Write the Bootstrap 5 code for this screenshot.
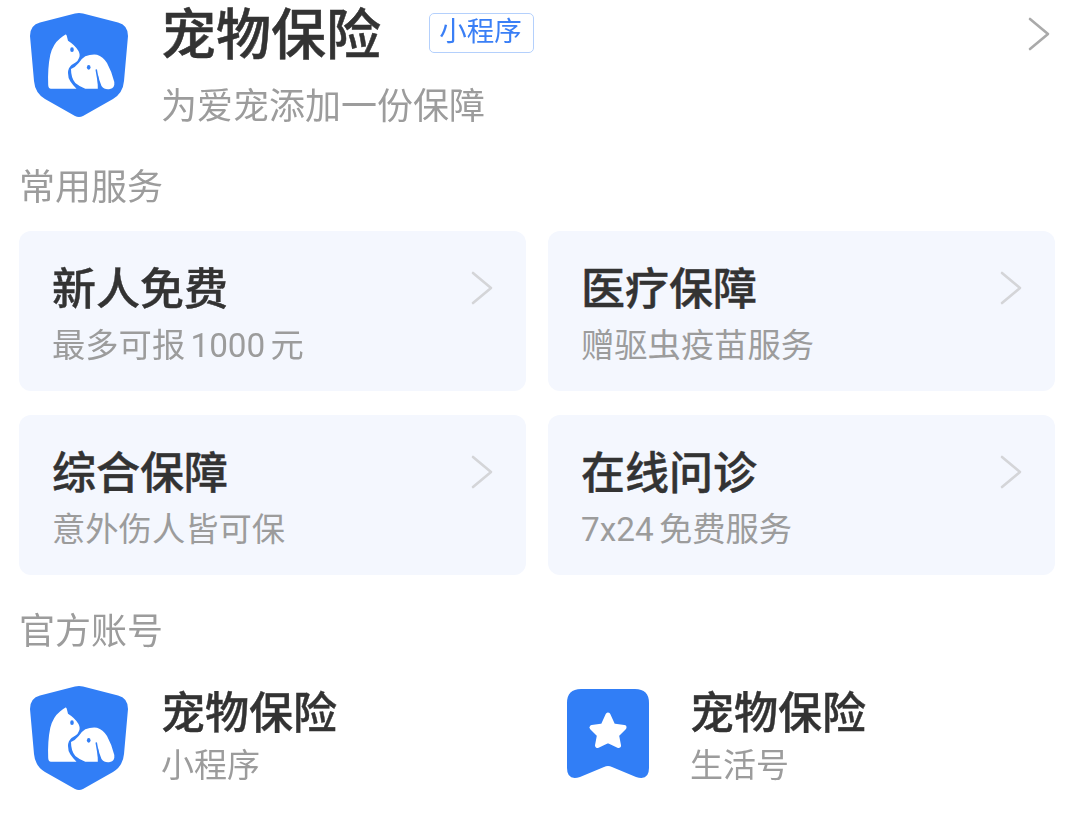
<!DOCTYPE html>
<html lang="zh">
<head>
<meta charset="utf-8">
<title>宠物保险</title>
<link rel="stylesheet" href="https://cdn.jsdelivr.net/npm/bootstrap@5.3.0/dist/css/bootstrap.min.css">
<style>
html,body{height:820px;overflow:hidden}
body{font-family:"Roboto","Noto Sans CJK SC",sans-serif;background:#fff;color:#333}
.pg{padding:0 25px 0 19px;filter:blur(.45px)}
.hd{height:138px;padding:13px 5px 0 11px}
.shield{width:98px;height:105px;flex:none}
.hd-main{margin-left:33px;margin-top:-13px}
.hd-title{font-size:55px;line-height:70px;font-weight:500;color:#333;margin:0;-webkit-text-stroke:.5px #333}
.tag{margin-left:48px;margin-top:-5px;height:40px;width:105px;border:1.5px solid #b4d0fc;border-radius:5px;color:#3a7ff6;font-size:27.500px;line-height:36px;text-align:center;white-space:nowrap;padding-right:2px}
.hd-sub{font-size:36px;line-height:50px;color:#9c9c9c;margin-top:12px}
.sec{font-size:36px;line-height:50px;color:#9c9c9c}
.sec-a{margin-top:25px}
.svc{display:grid;grid-template-columns:507px 507px;column-gap:22px;row-gap:24px;margin-top:18px}
.tile{height:160px;background:#f4f7fe;border-radius:12px;padding:0 33px}
.tile-t{font-size:44px;line-height:56px;font-weight:500;color:#333;margin-top:31px;-webkit-text-stroke:.4px #333}
.tile-s{font-size:33.300px;line-height:44px;color:#9c9c9c;margin-top:6px;white-space:nowrap;word-spacing:-3px}
.tile .chev{margin-top:40px}
.chev{flex:none}
.sec-b{margin-top:32px}
.acc{margin-top:29px;display:grid;grid-template-columns:529px 1fr}
.acc-i{height:110px}
.acc-l{width:142px;flex:none;padding-left:11px}
.acc-r{width:142px;flex:none;padding-left:19px}
.acc-t{font-size:44px;line-height:52px;font-weight:500;color:#333;margin-top:2px;-webkit-text-stroke:.4px #333}
.acc-s{font-size:33px;line-height:44px;color:#9c9c9c;margin-top:4px}
.t-col{min-width:0}
</style>
</head>
<body>
<svg width="0" height="0" class="d-block" aria-hidden="true">
<defs>
<symbol id="pet" viewBox="0 0 98 105">
<path fill="#317ef6" d="M49 0 Q51 0 53 .6 L88 9.500 Q98 12 98 23 L94 68 Q93 80 83 86 L53 103 Q49 105 45 103 L15 86 Q5 80 4 68 L0 23 Q0 12 10 9.500 L45 .6 Q47 0 49 0Z"/>
<path fill="#fff" d="M35.500 21.500 Q36.500 21 36.800 23 L38 27.700 Q45 32 48.500 38 Q50.500 42 49 45 Q48 48 45.500 49.500 L41.500 52 Q38 55 38 60 Q38 65 40.300 68.300 Q43 72.500 46.500 75.700 L21 75.700 Q18.300 75.700 18.200 72 Q17.500 55 20.300 41.700 Q23 31 30 25.500 Q33 23 35.500 21.500Z"/>
<path fill="#fff" d="M41 56 Q45 54.500 48.700 50 Q51 46 55.300 43.300 Q61 41 67 41.700 Q73 43.500 77 50 Q82 59 84.300 69 Q85 75 80 76 Q74.500 77 71.500 73 Q69 67 67.500 60 L67.800 75.700 L55.300 75.700 Q50 74 45.300 70 Q41 65 41 56Z"/>
<path fill="none" stroke="#317ef6" stroke-width="1.500" stroke-linecap="round" d="M66.300 57 L69.300 74.500"/>
<ellipse cx="42" cy="36.700" rx="1.800" ry="2.400" fill="#317ef6"/>
<ellipse cx="58.700" cy="54.300" rx="1.800" ry="2.400" fill="#317ef6"/>
</symbol>
<symbol id="chv" viewBox="0 0 22 34">
<path d="M2 2 L20 17 L2 32" fill="none" stroke="currentColor" stroke-width="2.600" stroke-linecap="round" stroke-linejoin="round"/>
</symbol>
</defs>
</svg>
<div class="pg">
<header class="hd d-flex align-items-start">
<svg class="shield"><use href="#pet"/></svg>
<div class="hd-main flex-grow-1">
<div class="d-flex align-items-center">
<h1 class="hd-title">宠物保险</h1>
<span class="tag">小程序</span>
</div>
<div class="hd-sub">为爱宠添加一份保障</div>
</div>
<svg class="chev" width="22" height="34" style="color:#aaa;margin-top:4px"><use href="#chv"/></svg>
</header>

<div class="sec sec-a">常用服务</div>
<div class="svc">
<div class="tile d-flex justify-content-between">
<div><div class="tile-t">新人免费</div><div class="tile-s">最多可报 1000 元</div></div>
<svg class="chev" width="22" height="34" style="color:#d4d5d8"><use href="#chv"/></svg>
</div>
<div class="tile d-flex justify-content-between">
<div><div class="tile-t">医疗保障</div><div class="tile-s">赠驱虫疫苗服务</div></div>
<svg class="chev" width="22" height="34" style="color:#d4d5d8"><use href="#chv"/></svg>
</div>
<div class="tile d-flex justify-content-between">
<div><div class="tile-t">综合保障</div><div class="tile-s">意外伤人皆可保</div></div>
<svg class="chev" width="22" height="34" style="color:#d4d5d8"><use href="#chv"/></svg>
</div>
<div class="tile d-flex justify-content-between">
<div><div class="tile-t">在线问诊</div><div class="tile-s">7x24 免费服务</div></div>
<svg class="chev" width="22" height="34" style="color:#d4d5d8"><use href="#chv"/></svg>
</div>
</div>

<div class="sec sec-b">官方账号</div>
<div class="acc">
<div class="acc-i d-flex align-items-start">
<div class="acc-l"><svg class="shield"><use href="#pet"/></svg></div>
<div class="t-col"><div class="acc-t">宠物保险</div><div class="acc-s">小程序</div></div>
</div>
<div class="acc-i d-flex align-items-start">
<div class="acc-r">
<svg width="82" height="90" viewBox="0 0 82 90" style="margin-top:3px">
<path fill="#317ef6" d="M14 0 H68 Q82 0 82 14 V79 Q82 92 69 88 L45 78 Q41 76 37 78 L13 88 Q0 92 0 79 V14 Q0 0 14 0Z"/>
<path fill="#fff" stroke="#fff" stroke-width="5" stroke-linejoin="round" d="M41 26 L46 37 L57 38.500 L49.500 46 L51.500 56.500 L41 51.500 L30.500 56.500 L32.500 46 L25 38.500 L36 37Z"/>
</svg>
</div>
<div class="t-col"><div class="acc-t">宠物保险</div><div class="acc-s">生活号</div></div>
</div>
</div>
</div>
</body>
</html>
